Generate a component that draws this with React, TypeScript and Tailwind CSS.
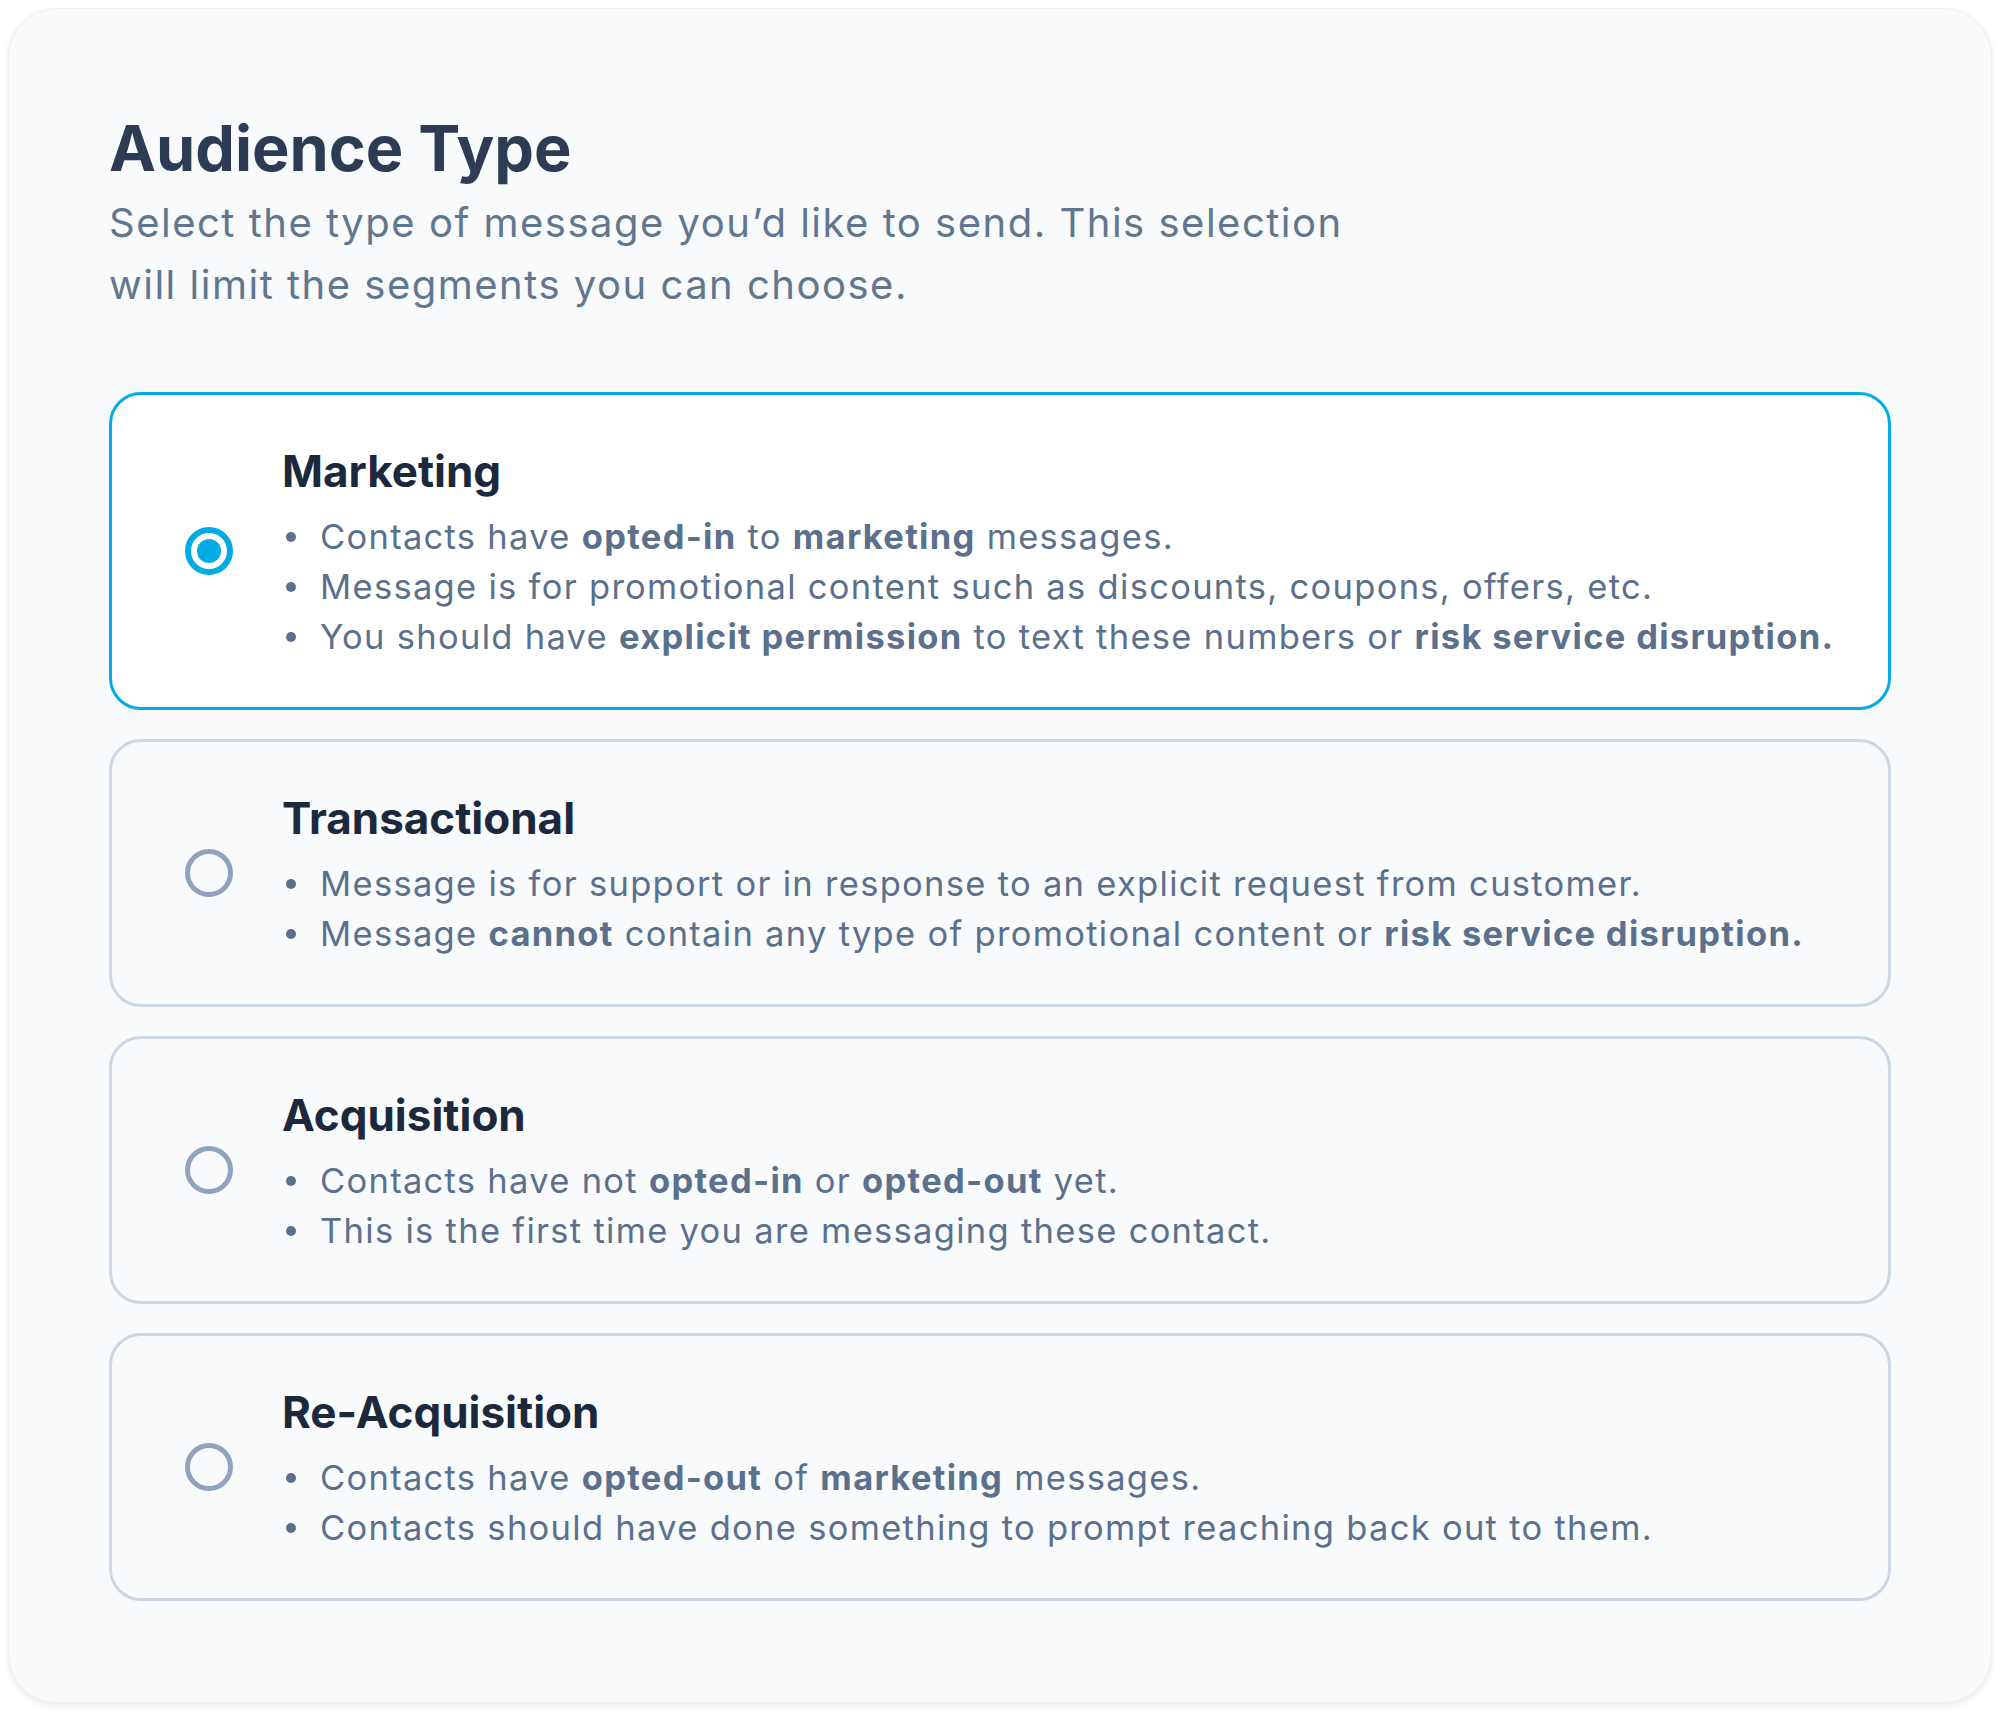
import React from "react";

type Part = { t: string; b?: boolean };
type Option = { title: string; bullets: Part[][]; selected?: boolean };

const options: Option[] = [
  {
    title: "Marketing",
    selected: true,
    bullets: [
      [{ t: "Contacts have " }, { t: "opted-in", b: true }, { t: " to " }, { t: "marketing", b: true }, { t: " messages." }],
      [{ t: "Message is for promotional content such as discounts, coupons, offers, etc." }],
      [
        { t: "You should have " },
        { t: "explicit permission", b: true },
        { t: " to text these numbers or " },
        { t: "risk service disruption.", b: true },
      ],
    ],
  },
  {
    title: "Transactional",
    bullets: [
      [{ t: "Message is for support or in response to an explicit request from customer." }],
      [
        { t: "Message " },
        { t: "cannot", b: true },
        { t: " contain any type of promotional content or " },
        { t: "risk service disruption.", b: true },
      ],
    ],
  },
  {
    title: "Acquisition",
    bullets: [
      [{ t: "Contacts have not " }, { t: "opted-in", b: true }, { t: " or " }, { t: "opted-out", b: true }, { t: " yet." }],
      [{ t: "This is the first time you are messaging these contact." }],
    ],
  },
  {
    title: "Re-Acquisition",
    bullets: [
      [{ t: "Contacts have " }, { t: "opted-out", b: true }, { t: " of " }, { t: "marketing", b: true }, { t: " messages." }],
      [{ t: "Contacts should have done something to prompt reaching back out to them." }],
    ],
  },
];

function Radio({ selected }: { selected?: boolean }) {
  if (selected) {
    return (
      <div className="w-[48px] h-[48px] shrink-0 rounded-full border-[6px] border-[#02abe3] flex items-center justify-center">
        <div className="w-[24px] h-[24px] rounded-full bg-[#02abe3]" />
      </div>
    );
  }
  return <div className="w-[48px] h-[48px] shrink-0 rounded-full border-[5px] border-[#8fa3bd]" />;
}

function OptionCard({ o }: { o: Option }) {
  return (
    <div
      className={
        o.selected
          ? "flex items-center rounded-[32px] border-[3px] border-[#02abe3] bg-white pl-[73px] pr-[40px] pt-[48px] pb-[45px]"
          : "flex items-center rounded-[32px] border-[3px] border-[#cdd7e3] bg-[#f8fafc] pl-[73px] pr-[40px] pt-[48px] pb-[45px]"
      }
    >
      <div className="-mt-[3px]">
        <Radio selected={o.selected} />
      </div>
      <div className="ml-[49px] flex flex-col">
        <div className="text-[44px] leading-[56px] font-bold text-[#1c293c]">{o.title}</div>
        <ul className="mt-[13px] flex flex-col">
          {o.bullets.map((line, i) => (
            <li key={i} className="flex items-center text-[34.5px] leading-[50px] tracking-[1.3px] text-[#5b708c]">
              <span className="ml-[4px] mr-[24px] w-[10px] h-[10px] rounded-full bg-[#5b708c] shrink-0" />
              <span>
                {line.map((p, j) =>
                  p.b ? (
                    <span key={j} className="font-bold">
                      {p.t}
                    </span>
                  ) : (
                    <span key={j}>{p.t}</span>
                  )
                )}
              </span>
            </li>
          ))}
        </ul>
      </div>
    </div>
  );
}

export default function App() {
  return (
    <div className="w-[2000px] h-[1715px] bg-white p-[8px] font-['Inter',sans-serif]">
      <div className="w-[1984px] h-[1695px] rounded-[48px] bg-[#f8fafc] border border-[#eceff3] shadow-[0_3px_6px_rgba(15,23,42,0.08)] px-[100px] pt-[99px]">
        <h1 className="text-[63px] leading-[80px] font-bold text-[#2c3c54]">Audience Type</h1>
        <p className="mt-[4px] max-w-[1290px] text-[40px] leading-[62px] tracking-[1.5px] text-[#61778f]">
          Select the type of message you’d like to send. This selection will limit the segments you can choose.
        </p>
        <div className="mt-[76px] flex flex-col gap-[29px]">
          {options.map((o) => (
            <OptionCard key={o.title} o={o} />
          ))}
        </div>
      </div>
    </div>
  );
}
